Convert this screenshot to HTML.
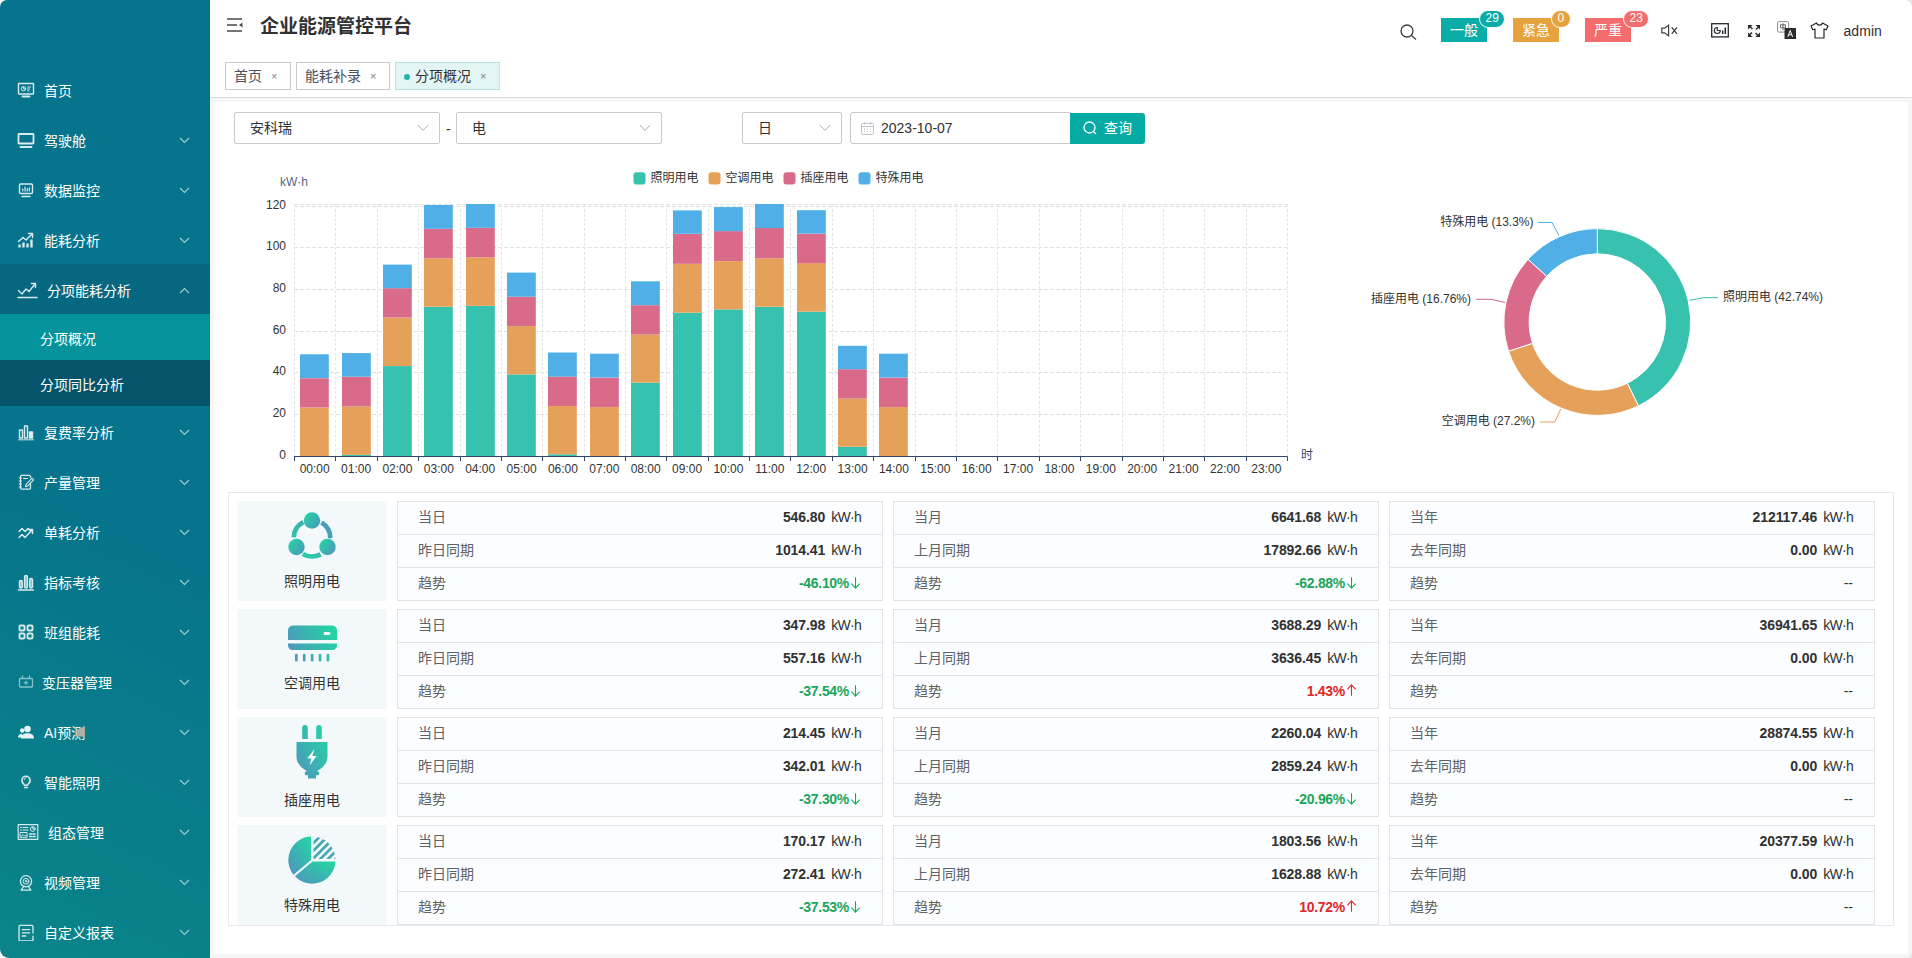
<!DOCTYPE html>
<html lang="zh-CN">
<head>
<meta charset="utf-8">
<title>企业能源管控平台</title>
<style>
*{box-sizing:border-box;margin:0;padding:0}
html,body{width:1912px;height:958px;overflow:hidden;background:#f6f6f6;font-family:"Liberation Sans", "Noto Sans CJK SC", sans-serif;font-size:14px;color:#303133}
.abs{position:absolute}
#app{position:relative;width:1912px;height:958px;overflow:hidden}
/* sidebar */
#sb{position:absolute;left:0;top:0;width:210px;height:958px;background:linear-gradient(25deg,#0a8489 0%,#06748c 48%);border-radius:7px 0 0 9px;z-index:5}
.sb-item{position:absolute;left:0;width:210px;height:50px;color:#fff;font-size:14px}
.sb-item .mi{position:absolute;left:17px;top:17px}
.sb-item span{position:absolute;top:0;line-height:55px;white-space:nowrap}
.sb-item .chev{position:absolute;left:179px;top:23px}
.sb-open{position:absolute;left:0;width:210px;background:#066880}
.sb-sub{position:absolute;left:0;width:210px;height:46px;background:#05546c;color:#fff;font-size:14px}
.sb-sub.act{background:#04929b}
.sb-sub span{position:absolute;left:40px;top:0;line-height:50px}
/* header */
#hd{position:absolute;left:210px;top:0;width:1702px;height:98px;background:#fff;border-bottom:1px solid #d8dce5}
#title{position:absolute;left:50px;top:0;line-height:54px;font-size:19px;font-weight:bold;color:#303133;white-space:nowrap}
.tab{position:absolute;top:62px;height:28px;border:1px solid #cbcbcb;background:#fff;color:#495060;font-size:14px;line-height:26px;padding-left:8px;white-space:nowrap}
.tab i{font-style:normal;font-size:11px;color:#7a808c;margin-left:9px;position:relative;top:-1px}
.tab.on{background:#e4f5f6;border-color:#b5e4e6;color:#303133}
.tab.on:before{content:"";display:inline-block;width:6px;height:6px;border-radius:50%;background:#26b2ad;margin-right:5px;position:relative;top:-1px}
.bd{position:absolute;top:18px;height:24px;width:46px;color:#fff;font-size:14px;line-height:25px;text-align:center}
.bb{position:absolute;top:9.5px;height:18px;border-radius:9px;border:1px solid #fff;color:#fff;font-size:12px;line-height:14.500px;text-align:center;padding:0 5.500px}
/* main */
#main{position:absolute;left:214px;top:102px;width:1694px;height:852px;background:#fff}
.sel{position:absolute;top:112px;height:32px;border:1px solid #c9c9c9;border-radius:2px;background:#fff;font-size:14px;line-height:31px;color:#303133;padding-left:15px}
.sel svg{position:absolute;right:10px;top:11px}
#btn{position:absolute;left:1070px;top:113px;width:75px;height:31px;background:#06aaa5;border-radius:0 3px 3px 0;color:#fff;font-size:14px;line-height:30px}
#wrap{position:absolute;left:228px;top:492px;width:1666px;height:434px;border:1px solid #e6e9ed;background:#fff}
.card{position:absolute;left:237px;width:150px;height:100px;background:#f3f8fb}
.cname{position:absolute;left:237px;width:150px;text-align:center;font-size:14px;line-height:22px;color:#303133}
.tbl{position:absolute;width:486px;height:100px;border:1px solid #dfe4ea;background:#fcfdfe}
.row{position:relative;height:33px;border-bottom:1px solid #dfe4ea;font-size:14px;line-height:30px}
.row:last-child{border-bottom:none;height:32px}
.row .k{position:absolute;left:20px;color:#606266}
.row .v{position:absolute;right:21px;color:#303133;white-space:nowrap}
.row .v i{font-style:normal;letter-spacing:-0.7px;margin-left:6px}
.row .v b.dn,.row .v b.up{letter-spacing:-0.3px;margin-right:1px}
.row b{font-weight:bold;letter-spacing:-0.1px}
.dn{color:#1ca55c}.up{color:#e0272a}.na{color:#303133}
</style>
</head>
<body>
<div id="app">
<div id="hd">
  <svg class="abs" style="left:17px;top:18px" width="16" height="14" viewBox="0 0 16 14" fill="none" stroke="#4a4a4a" stroke-width="1.3"><path d="M0 1h15M0 7h10M0 13h15"/><path d="M15.500 4.500v5l-3.500-2.500z" fill="#4a4a4a" stroke="none"/></svg>
  <div id="title">企业能源管控平台</div>
  <div class="tab" style="left:15px;width:66px">首页<i>×</i></div>
  <div class="tab" style="left:86px;width:94px">能耗补录<i>×</i></div>
  <div class="tab on" style="left:185px;width:105px">分项概况<i>×</i></div>
  <svg class="abs" style="left:1190px;top:24px" width="17" height="16" viewBox="0 0 17 16" fill="none" stroke="#3c4043" stroke-width="1.3"><circle cx="7" cy="7" r="6"/><path d="M11.500 11.500l4.500 4"/></svg>
  <div class="bd" style="left:1231px;background:#0aaca7">一般</div><div class="bb" style="left:1269px;background:#0aaca7">29</div>
  <div class="bd" style="left:1303px;background:#e6a23c">紧急</div><div class="bb" style="left:1341px;background:#e6a23c">0</div>
  <div class="bd" style="left:1375px;background:#f56c6c">严重</div><div class="bb" style="left:1413px;background:#f56c6c">23</div>
  <svg class="abs" style="left:1451px;top:24px" width="17" height="13" viewBox="0 0 17 13" fill="none" stroke="#3c4043" stroke-width="1.200"><path d="M0.800 4.200h2.800l4-3v10.600l-4-3h-2.800z"/><path d="M10.700 3.400l5.300 6.400M16 3.400l-5.300 6.400" stroke-width="1.300"/></svg>
  <svg class="abs" style="left:1501px;top:23px" width="18" height="15" viewBox="0 0 18 15" fill="none" stroke="#24292e" stroke-width="1.300"><rect x="0.700" y="0.700" width="16.600" height="13.200"/><path d="M9.300 7.500a3 3 0 1 1-3-3v3z" stroke-width="1.100"/><path d="M11.700 11v-3.500M14.300 11v-6.500" stroke-width="1.500"/></svg>
  <svg class="abs" style="left:1538px;top:25px" width="12" height="12" viewBox="0 0 12 12" fill="#24292e"><path d="M0 0h4.500l-1.500 1.500 2 2-1 1-2-2-2 2zM12 0v4.500l-1.500-1.500-2 2-1-1 2-2-2-2zM0 12v-4.500l1.500 1.500 2-2 1 1-2 2 2 2zM12 12h-4.500l1.500-1.500-2-2 1-1 2 2 2-2z"/></svg>
  <svg class="abs" style="left:1567px;top:21px" width="20" height="18" viewBox="0 0 20 18"><rect x="0.600" y="0.600" width="11" height="10.500" rx="1.200" fill="#fff" stroke="#8a8a8a" stroke-width="1"/><path d="M3.500 3.800h5v3h-5zM6 2.300v7" fill="none" stroke="#555" stroke-width="0.900"/><rect x="7.500" y="7" width="11.500" height="11" rx="0.500" fill="#2b2b2b"/><path d="M10.800 15.800l2.400-6.300 2.400 6.300M11.700 13.800h3" fill="none" stroke="#fff" stroke-width="1"/></svg>
  <svg class="abs" style="left:1600px;top:22px" width="19" height="17" viewBox="0 0 19 17" fill="none" stroke="#24292e" stroke-width="1.200" stroke-linejoin="round"><path d="M6.500 1c0.500 1.500 1.700 2.200 3 2.200s2.500-0.700 3-2.200l5.500 3-1.800 3.800-2.200-0.800v9h-9v-9l-2.200 0.800-1.800-3.800z"/></svg>
  <div class="abs" style="left:1633.500px;top:22.400px;font-size:14px;line-height:18px;color:#303133;letter-spacing:0.05px">admin</div>
</div>
<div id="main"></div>
<svg class="abs" style="left:1902px;top:0" width="10" height="10" viewBox="0 0 10 10"><path d="M3.500 0h6.500v7a7.500 7.500 0 0 0-6.500-7z" fill="#e6e6e6"/></svg>
<svg class="abs" style="left:1902px;top:948px" width="10" height="10" viewBox="0 0 10 10"><path d="M10 3v7h-6.500a7.500 7.500 0 0 0 6.500-7z" fill="#e9e9e9"/></svg>
<div id="sb">
<div class="sb-open" style="top:264px;height:50px"></div>
<div class="sb-sub act" style="top:314px"><span>分项概况</span></div>
<div class="sb-sub" style="top:360px"><span>分项同比分析</span></div>
<div class="sb-item" style="top:64px"><svg class="mi" width="18" height="18" viewBox="0 0 18 18" fill="none" stroke="#d8ebee" stroke-width="1.4" stroke-linecap="round" stroke-linejoin="round"><rect x="1.5" y="2.5" width="15" height="10.5" rx="0.5"/><path d="M5.5 15.5h7" stroke-width="1.8"/><circle cx="6.5" cy="7.7" r="2.2" stroke-width="1"/><path d="M6.5 6.4v1.4h1.2M10.5 6h3M10.5 8h2.2M10.5 9.8h1.4" stroke-width="1"/></svg><span style="left:44px">首页</span></div>
<div class="sb-item" style="top:114px"><svg class="mi" width="18" height="18" viewBox="0 0 18 18" fill="none" stroke="#d8ebee" stroke-width="1.4" stroke-linecap="round" stroke-linejoin="round"><rect x="1.5" y="3" width="15" height="9.5" rx="0.5" stroke-width="1.8"/><path d="M3.5 16h11" stroke-width="1.8"/></svg><span style="left:44px">驾驶舱</span><svg class="chev" width="11" height="7" viewBox="0 0 11 7" fill="none" stroke="#a5ccd4" stroke-width="1.1"><path d="M1 1l4.5 4.5L10 1"/></svg></div>
<div class="sb-item" style="top:164px"><svg class="mi" width="18" height="18" viewBox="0 0 18 18" fill="none" stroke="#d8ebee" stroke-width="1.4" stroke-linecap="round" stroke-linejoin="round"><rect x="2.5" y="3" width="13" height="9.5" rx="1.2"/><path d="M5 15.5h8" stroke-width="1.5"/><path d="M5.8 10V8M8 10V6M10.2 10V7.5M12.3 10V6.8" stroke-width="1.2"/></svg><span style="left:44px">数据监控</span><svg class="chev" width="11" height="7" viewBox="0 0 11 7" fill="none" stroke="#a5ccd4" stroke-width="1.1"><path d="M1 1l4.5 4.5L10 1"/></svg></div>
<div class="sb-item" style="top:214px"><svg class="mi" width="18" height="18" viewBox="0 0 18 18" fill="none" stroke="#d8ebee" stroke-width="1.4" stroke-linecap="round" stroke-linejoin="round"><path d="M2.5 16.5v-3M6.5 16.5v-5M10.5 16.5v-4M14.5 16.5v-8" stroke-width="2.4" stroke-linecap="butt"/><path d="M1.5 10.5l4.5-4 3 2.5 6-6" stroke-width="1.5"/><path d="M11.5 2.5h4v4" stroke-width="1.5"/></svg><span style="left:44px">能耗分析</span><svg class="chev" width="11" height="7" viewBox="0 0 11 7" fill="none" stroke="#a5ccd4" stroke-width="1.1"><path d="M1 1l4.5 4.5L10 1"/></svg></div>
<div class="sb-item" style="top:264px"><svg class="mi" width="21" height="18" viewBox="0 0 21 18" fill="none" stroke="#d8ebee" stroke-width="1.4" stroke-linecap="round" stroke-linejoin="round"><path d="M1.5 9.5l3.5 3.5 4-5 3 2.5 6-7.5" stroke-width="1.4"/><path d="M14.5 2.5h4v4" stroke-width="1.4"/><path d="M1 16.5h19" stroke-width="1.5"/></svg><span style="left:47px">分项能耗分析</span><svg class="chev" width="11" height="7" viewBox="0 0 11 7" fill="none" stroke="#a5ccd4" stroke-width="1.1"><path d="M1 6l4.5-4.5L10 6"/></svg></div>
<div class="sb-item" style="top:406px"><svg class="mi" width="18" height="18" viewBox="0 0 18 18" fill="none" stroke="#d8ebee" stroke-width="1.4" stroke-linecap="round" stroke-linejoin="round"><rect x="2.5" y="7" width="3" height="8"/><rect x="7.5" y="3" width="3" height="12"/><rect x="12.5" y="9" width="3" height="6" fill="#e8f4f6"/><path d="M1.5 16.8h15" stroke-width="1"/></svg><span style="left:44px">复费率分析</span><svg class="chev" width="11" height="7" viewBox="0 0 11 7" fill="none" stroke="#a5ccd4" stroke-width="1.1"><path d="M1 1l4.5 4.5L10 1"/></svg></div>
<div class="sb-item" style="top:456px"><svg class="mi" width="18" height="18" viewBox="0 0 18 18" fill="none" stroke="#d8ebee" stroke-width="1.4" stroke-linecap="round" stroke-linejoin="round"><path d="M13.5 10.500v4.500a1.200 1.200 0 0 1-1.200 1.200h-7.600a1.200 1.200 0 0 1-1.200-1.200v-11.500a1.200 1.200 0 0 1 1.200-1.200h7.600a1.200 1.200 0 0 1 1.200 1.200v1" stroke-width="1.200"/><path d="M2.200 5h2.400M2.200 8h2.400M2.200 11h2.400M2.200 14h2.400" stroke-width="1"/><path d="M15 5.200l1.600 1.600-5.800 6.200-2.300.700.600-2.400z" stroke-width="1.100"/><path d="M6.500 5.500h4" stroke-width="1"/></svg><span style="left:44px">产量管理</span><svg class="chev" width="11" height="7" viewBox="0 0 11 7" fill="none" stroke="#a5ccd4" stroke-width="1.1"><path d="M1 1l4.5 4.5L10 1"/></svg></div>
<div class="sb-item" style="top:506px"><svg class="mi" width="18" height="18" viewBox="0 0 18 18" fill="none" stroke="#d8ebee" stroke-width="1.4" stroke-linecap="round" stroke-linejoin="round"><path d="M2 8.5l3-3 3 3 3-3 2.5 2.5" stroke-width="1.5"/><path d="M2 14.5l3-3 3 3 7-7.5" stroke-width="1.5"/><path d="M11.5 6.5h4v4" stroke-width="1.5"/></svg><span style="left:44px">单耗分析</span><svg class="chev" width="11" height="7" viewBox="0 0 11 7" fill="none" stroke="#a5ccd4" stroke-width="1.1"><path d="M1 1l4.5 4.5L10 1"/></svg></div>
<div class="sb-item" style="top:556px"><svg class="mi" width="18" height="18" viewBox="0 0 18 18" fill="none" stroke="#d8ebee" stroke-width="1.4" stroke-linecap="round" stroke-linejoin="round"><rect x="2.500" y="7.500" width="2.800" height="7.500" rx="1.300" fill="#e8f4f6" fill-opacity=".55"/><rect x="7.600" y="2.500" width="2.800" height="12.500" rx="1.300" fill="#e8f4f6" fill-opacity=".55"/><rect x="12.700" y="5.500" width="2.800" height="9.500" rx="1.300" fill="#e8f4f6" fill-opacity=".55"/><path d="M1.500 17h15" stroke-width="1.300"/></svg><span style="left:44px">指标考核</span><svg class="chev" width="11" height="7" viewBox="0 0 11 7" fill="none" stroke="#a5ccd4" stroke-width="1.1"><path d="M1 1l4.5 4.5L10 1"/></svg></div>
<div class="sb-item" style="top:606px"><svg class="mi" width="18" height="18" viewBox="0 0 18 18" fill="none" stroke="#d8ebee" stroke-width="1.4" stroke-linecap="round" stroke-linejoin="round"><rect x="2.500" y="2.500" width="5" height="5" rx="1" stroke-width="1.900"/><rect x="10.500" y="2.500" width="5" height="5" rx="1" stroke-width="1.900"/><rect x="2.500" y="10.500" width="5" height="5" rx="1" stroke-width="1.900"/><rect x="10.500" y="10.500" width="5" height="5" rx="1" stroke-width="1.900"/></svg><span style="left:44px">班组能耗</span><svg class="chev" width="11" height="7" viewBox="0 0 11 7" fill="none" stroke="#a5ccd4" stroke-width="1.1"><path d="M1 1l4.5 4.5L10 1"/></svg></div>
<div class="sb-item" style="top:656px"><svg class="mi" width="18" height="18" viewBox="0 0 18 18" fill="none" stroke="#d8ebee" stroke-width="1.4" stroke-linecap="round" stroke-linejoin="round"><g opacity=".62"><rect x="2.500" y="5.500" width="13" height="8.500" rx="0.800" stroke-width="1.300"/><path d="M5.500 5.500v-2.500M12.500 5.500v-2.500" stroke-width="1.300"/><path d="M9 8v3.500M7.300 9.700h3.400" stroke-width="1.200"/></g></svg><span style="left:42px">变压器管理</span><svg class="chev" width="11" height="7" viewBox="0 0 11 7" fill="none" stroke="#a5ccd4" stroke-width="1.1"><path d="M1 1l4.5 4.5L10 1"/></svg></div>
<div class="sb-item" style="top:706px"><svg class="mi" width="18" height="18" viewBox="0 0 18 18" fill="none" stroke="#d8ebee" stroke-width="1.4" stroke-linecap="round" stroke-linejoin="round"><circle cx="10.5" cy="6" r="3.3" fill="#e8f4f6" stroke="none"/><path d="M4 15.5c0-3.5 2.8-5.2 6.5-5.2s6.5 1.7 6.5 5.2z" fill="#e8f4f6" stroke="none"/><circle cx="5.2" cy="7.5" r="2.2" fill="#e8f4f6" stroke="none"/><path d="M1 14.5c0-2.5 1.7-3.8 4-3.8v3.8z" fill="#e8f4f6" stroke="none"/></svg><span style="left:44px">AI预测</span><svg class="chev" width="11" height="7" viewBox="0 0 11 7" fill="none" stroke="#a5ccd4" stroke-width="1.1"><path d="M1 1l4.5 4.5L10 1"/></svg></div>
<div class="sb-item" style="top:756px"><svg class="mi" width="18" height="18" viewBox="0 0 18 18" fill="none" stroke="#d8ebee" stroke-width="1.4" stroke-linecap="round" stroke-linejoin="round"><path d="M9 3.200a4.200 4.200 0 0 0-2.400 7.600c.5.400.800.900.800 1.500h3.200c0-.6.300-1.100.8-1.500a4.200 4.200 0 0 0-2.400-7.600z" stroke-width="1.500"/><path d="M7.600 14.500h2.800" stroke-width="1.500"/><path d="M7 6.700a2.100 2.100 0 0 1 1.500-1.600" stroke-width="1"/></svg><span style="left:44px">智能照明</span><svg class="chev" width="11" height="7" viewBox="0 0 11 7" fill="none" stroke="#a5ccd4" stroke-width="1.1"><path d="M1 1l4.5 4.5L10 1"/></svg></div>
<div class="sb-item" style="top:806px"><svg class="mi" width="22" height="18" viewBox="0 0 22 18" fill="none" stroke="#d8ebee" stroke-width="1.4" stroke-linecap="round" stroke-linejoin="round"><rect x="1.2" y="1.7" width="19.6" height="14.6" stroke-width="1.2"/><path d="M3.5 4.5h1M6 4.5h5M3.5 7h1M6 7h5" stroke-width="1.1"/><circle cx="15.8" cy="6" r="2.4" stroke-width="1"/><path d="M15.8 4.4V6h1.6" stroke-width="1"/><rect x="3.5" y="9.5" width="6.5" height="4.8" stroke-width="1"/><path d="M4 13.5l2-2 1.5 1.5 1-1 1.3 1.3" stroke-width="0.9"/><path d="M12.5 11h2.2M16 11h2.2M12.5 13.5h2.2M16 13.5h2.2" stroke-width="1.3"/></svg><span style="left:48px">组态管理</span><svg class="chev" width="11" height="7" viewBox="0 0 11 7" fill="none" stroke="#a5ccd4" stroke-width="1.1"><path d="M1 1l4.5 4.5L10 1"/></svg></div>
<div class="sb-item" style="top:856px"><svg class="mi" width="18" height="18" viewBox="0 0 18 18" fill="none" stroke="#d8ebee" stroke-width="1.4" stroke-linecap="round" stroke-linejoin="round"><g transform="translate(0 0.8)"><circle cx="9" cy="7.5" r="5.600" stroke-width="1.300"/><circle cx="9" cy="7.500" r="2.900" stroke-width="1"/><circle cx="9" cy="7.500" r="0.900" stroke-width="0.900"/><path d="M6.500 12.800l-2.300 3.400M11.500 12.800l2.300 3.400M4 16.300h10" stroke-width="1.200"/></g></svg><span style="left:44px">视频管理</span><svg class="chev" width="11" height="7" viewBox="0 0 11 7" fill="none" stroke="#a5ccd4" stroke-width="1.1"><path d="M1 1l4.5 4.5L10 1"/></svg></div>
<div class="sb-item" style="top:906px"><svg class="mi" width="18" height="18" viewBox="0 0 18 18" fill="none" stroke="#d8ebee" stroke-width="1.4" stroke-linecap="round" stroke-linejoin="round"><path d="M16.500 12.500v3.500a1.200 1.200 0 0 1-1.200 1.200h-11.600a1.200 1.200 0 0 1-1.200-1.200v-13a1.200 1.200 0 0 1 1.200-1.200h11.600a1.200 1.200 0 0 1 1.200 1.200v6.500" stroke-width="1.300" transform="translate(-0.500 0.600)"/><path d="M5.300 6.600h7.400M5.300 9.800h7.400M5.300 13h3.500" stroke-width="1.300"/></svg><span style="left:44px">自定义报表</span><svg class="chev" width="11" height="7" viewBox="0 0 11 7" fill="none" stroke="#a5ccd4" stroke-width="1.1"><path d="M1 1l4.5 4.5L10 1"/></svg></div>
</div>
<!-- filters -->
<div class="sel" style="left:234px;width:206px">安科瑞<svg width="12" height="8" viewBox="0 0 12 8" fill="none" stroke="#a8abb2" stroke-width="1"><path d="M1 1l5 5.500 5-5.500"/></svg></div>
<div class="abs" style="left:446px;top:113px;line-height:32px;font-size:14px;color:#303133">-</div>
<div class="sel" style="left:456px;width:206px">电<svg width="12" height="8" viewBox="0 0 12 8" fill="none" stroke="#a8abb2" stroke-width="1"><path d="M1 1l5 5.500 5-5.500"/></svg></div>
<div class="sel" style="left:742px;width:100px">日<svg width="12" height="8" viewBox="0 0 12 8" fill="none" stroke="#a8abb2" stroke-width="1"><path d="M1 1l5 5.500 5-5.500"/></svg></div>
<div class="sel" style="left:850px;width:221px;padding-left:30px;border-radius:3px 0 0 3px"><svg style="left:10px;top:9px" width="13" height="13" viewBox="0 0 13 13" fill="none" stroke="#c0c4cc" stroke-width="1"><rect x="0.500" y="1.500" width="12" height="11" rx="1"/><path d="M0.500 4.500h12M3.500 0v2.500M9.500 0v2.500M3 7h1M6 7h1M9 7h1M3 9.500h1M6 9.500h1M9 9.500h1"/></svg>2023-10-07</div>
<div id="btn"><svg class="abs" style="left:13px;top:8px" width="14" height="14" viewBox="0 0 14 14" fill="none" stroke="#fff" stroke-width="1.300"><circle cx="6.500" cy="6.500" r="5.500"/><path d="M10.500 10.500l2.500 2.500"/></svg><span class="abs" style="left:34px">查询</span></div>
<svg class="abs" style="left:210px;top:150px" width="1130" height="340" viewBox="210 150 1130 340" font-family='&quot;Liberation Sans&quot;, &quot;Noto Sans CJK SC&quot;, sans-serif' font-size="12">
<text x="286" y="459.3" text-anchor="end" fill="#333">0</text>
<line x1="294.0" x2="1287.0" y1="414.5" y2="414.5" stroke="#e2e2e2" stroke-dasharray="4 2" stroke-width="1"/>
<text x="286" y="417.3" text-anchor="end" fill="#333">20</text>
<line x1="294.0" x2="1287.0" y1="372.5" y2="372.5" stroke="#e2e2e2" stroke-dasharray="4 2" stroke-width="1"/>
<text x="286" y="375.3" text-anchor="end" fill="#333">40</text>
<line x1="294.0" x2="1287.0" y1="331.5" y2="331.5" stroke="#e2e2e2" stroke-dasharray="4 2" stroke-width="1"/>
<text x="286" y="334.3" text-anchor="end" fill="#333">60</text>
<line x1="294.0" x2="1287.0" y1="289.5" y2="289.5" stroke="#e2e2e2" stroke-dasharray="4 2" stroke-width="1"/>
<text x="286" y="292.3" text-anchor="end" fill="#333">80</text>
<line x1="294.0" x2="1287.0" y1="247.5" y2="247.5" stroke="#e2e2e2" stroke-dasharray="4 2" stroke-width="1"/>
<text x="286" y="250.3" text-anchor="end" fill="#333">100</text>
<line x1="294.0" x2="1287.0" y1="206.5" y2="206.5" stroke="#e2e2e2" stroke-dasharray="4 2" stroke-width="1"/>
<text x="286" y="209.3" text-anchor="end" fill="#333">120</text>
<line x1="294.0" x2="1287.0" y1="204.5" y2="204.5" stroke="#e2e2e2" stroke-dasharray="4 2" stroke-width="1"/>
<line x1="294.5" x2="294.5" y1="204" y2="456.0" stroke="#e6e6e6" stroke-dasharray="3 1.8" stroke-width="1"/>
<line x1="335.5" x2="335.5" y1="204" y2="456.0" stroke="#e6e6e6" stroke-dasharray="3 1.8" stroke-width="1"/>
<line x1="377.5" x2="377.5" y1="204" y2="456.0" stroke="#e6e6e6" stroke-dasharray="3 1.8" stroke-width="1"/>
<line x1="418.5" x2="418.5" y1="204" y2="456.0" stroke="#e6e6e6" stroke-dasharray="3 1.8" stroke-width="1"/>
<line x1="460.5" x2="460.5" y1="204" y2="456.0" stroke="#e6e6e6" stroke-dasharray="3 1.8" stroke-width="1"/>
<line x1="501.5" x2="501.5" y1="204" y2="456.0" stroke="#e6e6e6" stroke-dasharray="3 1.8" stroke-width="1"/>
<line x1="542.5" x2="542.5" y1="204" y2="456.0" stroke="#e6e6e6" stroke-dasharray="3 1.8" stroke-width="1"/>
<line x1="584.5" x2="584.5" y1="204" y2="456.0" stroke="#e6e6e6" stroke-dasharray="3 1.8" stroke-width="1"/>
<line x1="625.5" x2="625.5" y1="204" y2="456.0" stroke="#e6e6e6" stroke-dasharray="3 1.8" stroke-width="1"/>
<line x1="666.5" x2="666.5" y1="204" y2="456.0" stroke="#e6e6e6" stroke-dasharray="3 1.8" stroke-width="1"/>
<line x1="708.5" x2="708.5" y1="204" y2="456.0" stroke="#e6e6e6" stroke-dasharray="3 1.8" stroke-width="1"/>
<line x1="749.5" x2="749.5" y1="204" y2="456.0" stroke="#e6e6e6" stroke-dasharray="3 1.8" stroke-width="1"/>
<line x1="790.5" x2="790.5" y1="204" y2="456.0" stroke="#e6e6e6" stroke-dasharray="3 1.8" stroke-width="1"/>
<line x1="832.5" x2="832.5" y1="204" y2="456.0" stroke="#e6e6e6" stroke-dasharray="3 1.8" stroke-width="1"/>
<line x1="873.5" x2="873.5" y1="204" y2="456.0" stroke="#e6e6e6" stroke-dasharray="3 1.8" stroke-width="1"/>
<line x1="915.5" x2="915.5" y1="204" y2="456.0" stroke="#e6e6e6" stroke-dasharray="3 1.8" stroke-width="1"/>
<line x1="956.5" x2="956.5" y1="204" y2="456.0" stroke="#e6e6e6" stroke-dasharray="3 1.8" stroke-width="1"/>
<line x1="997.5" x2="997.5" y1="204" y2="456.0" stroke="#e6e6e6" stroke-dasharray="3 1.8" stroke-width="1"/>
<line x1="1039.5" x2="1039.5" y1="204" y2="456.0" stroke="#e6e6e6" stroke-dasharray="3 1.8" stroke-width="1"/>
<line x1="1080.5" x2="1080.5" y1="204" y2="456.0" stroke="#e6e6e6" stroke-dasharray="3 1.8" stroke-width="1"/>
<line x1="1122.5" x2="1122.5" y1="204" y2="456.0" stroke="#e6e6e6" stroke-dasharray="3 1.8" stroke-width="1"/>
<line x1="1163.5" x2="1163.5" y1="204" y2="456.0" stroke="#e6e6e6" stroke-dasharray="3 1.8" stroke-width="1"/>
<line x1="1204.5" x2="1204.5" y1="204" y2="456.0" stroke="#e6e6e6" stroke-dasharray="3 1.8" stroke-width="1"/>
<line x1="1246.5" x2="1246.5" y1="204" y2="456.0" stroke="#e6e6e6" stroke-dasharray="3 1.8" stroke-width="1"/>
<line x1="1287.5" x2="1287.5" y1="204" y2="456.0" stroke="#e6e6e6" stroke-dasharray="3 1.8" stroke-width="1"/>
<rect x="300" y="407.5" width="28.8" height="48.5" fill="#e5a15a"/>
<rect x="300" y="378.2" width="28.8" height="29.3" fill="#da6a8a"/>
<rect x="300" y="354.3" width="28.8" height="23.8" fill="#4fafe6"/>
<rect x="342" y="455.0" width="28.8" height="1.0" fill="#36c2ae"/>
<rect x="342" y="406.4" width="28.8" height="48.5" fill="#e5a15a"/>
<rect x="342" y="376.7" width="28.8" height="29.7" fill="#da6a8a"/>
<rect x="342" y="353.1" width="28.8" height="23.6" fill="#4fafe6"/>
<rect x="383" y="366.1" width="28.8" height="89.9" fill="#36c2ae"/>
<rect x="383" y="317.5" width="28.8" height="48.5" fill="#e5a15a"/>
<rect x="383" y="288.2" width="28.8" height="29.3" fill="#da6a8a"/>
<rect x="383" y="264.6" width="28.8" height="23.6" fill="#4fafe6"/>
<rect x="424" y="306.9" width="28.8" height="149.1" fill="#36c2ae"/>
<rect x="424" y="258.3" width="28.8" height="48.5" fill="#e5a15a"/>
<rect x="424" y="228.8" width="28.8" height="29.5" fill="#da6a8a"/>
<rect x="424" y="205.0" width="28.8" height="23.8" fill="#4fafe6"/>
<rect x="466" y="305.8" width="28.8" height="150.2" fill="#36c2ae"/>
<rect x="466" y="257.3" width="28.8" height="48.5" fill="#e5a15a"/>
<rect x="466" y="227.8" width="28.8" height="29.5" fill="#da6a8a"/>
<rect x="466" y="204.0" width="28.8" height="23.8" fill="#4fafe6"/>
<rect x="507" y="374.4" width="28.8" height="81.6" fill="#36c2ae"/>
<rect x="507" y="326.1" width="28.8" height="48.3" fill="#e5a15a"/>
<rect x="507" y="296.6" width="28.8" height="29.5" fill="#da6a8a"/>
<rect x="507" y="272.6" width="28.8" height="24.1" fill="#4fafe6"/>
<rect x="548" y="454.3" width="28.8" height="1.7" fill="#36c2ae"/>
<rect x="548" y="406.0" width="28.8" height="48.3" fill="#e5a15a"/>
<rect x="548" y="376.5" width="28.8" height="29.5" fill="#da6a8a"/>
<rect x="548" y="352.5" width="28.8" height="24.1" fill="#4fafe6"/>
<rect x="590" y="407.1" width="28.8" height="48.9" fill="#e5a15a"/>
<rect x="590" y="377.6" width="28.8" height="29.5" fill="#da6a8a"/>
<rect x="590" y="353.7" width="28.8" height="23.8" fill="#4fafe6"/>
<rect x="631" y="382.6" width="28.8" height="73.4" fill="#36c2ae"/>
<rect x="631" y="334.5" width="28.8" height="48.1" fill="#e5a15a"/>
<rect x="631" y="305.2" width="28.8" height="29.3" fill="#da6a8a"/>
<rect x="631" y="281.3" width="28.8" height="23.8" fill="#4fafe6"/>
<rect x="673" y="312.7" width="28.8" height="143.3" fill="#36c2ae"/>
<rect x="673" y="263.8" width="28.8" height="48.9" fill="#e5a15a"/>
<rect x="673" y="233.9" width="28.8" height="29.9" fill="#da6a8a"/>
<rect x="673" y="210.4" width="28.8" height="23.4" fill="#4fafe6"/>
<rect x="714" y="309.4" width="28.8" height="146.6" fill="#36c2ae"/>
<rect x="714" y="261.1" width="28.8" height="48.3" fill="#e5a15a"/>
<rect x="714" y="231.1" width="28.8" height="29.9" fill="#da6a8a"/>
<rect x="714" y="207.1" width="28.8" height="24.1" fill="#4fafe6"/>
<rect x="755" y="306.9" width="28.8" height="149.1" fill="#36c2ae"/>
<rect x="755" y="258.3" width="28.8" height="48.5" fill="#e5a15a"/>
<rect x="755" y="228.0" width="28.8" height="30.3" fill="#da6a8a"/>
<rect x="755" y="204.0" width="28.8" height="24.1" fill="#4fafe6"/>
<rect x="797" y="311.7" width="28.8" height="144.3" fill="#36c2ae"/>
<rect x="797" y="263.1" width="28.8" height="48.5" fill="#e5a15a"/>
<rect x="797" y="233.7" width="28.8" height="29.5" fill="#da6a8a"/>
<rect x="797" y="210.2" width="28.8" height="23.4" fill="#4fafe6"/>
<rect x="838" y="446.8" width="28.8" height="9.2" fill="#36c2ae"/>
<rect x="838" y="398.5" width="28.8" height="48.3" fill="#e5a15a"/>
<rect x="838" y="369.2" width="28.8" height="29.3" fill="#da6a8a"/>
<rect x="838" y="345.8" width="28.8" height="23.4" fill="#4fafe6"/>
<rect x="879" y="407.1" width="28.8" height="48.9" fill="#e5a15a"/>
<rect x="879" y="377.6" width="28.8" height="29.5" fill="#da6a8a"/>
<rect x="879" y="353.7" width="28.8" height="23.8" fill="#4fafe6"/>
<line x1="294.0" x2="1287.5" y1="456.5" y2="456.5" stroke="#33466f" stroke-width="1"/>
<line x1="294.5" x2="294.5" y1="456.5" y2="461.0" stroke="#33466f" stroke-width="1"/>
<line x1="335.5" x2="335.5" y1="456.5" y2="461.0" stroke="#33466f" stroke-width="1"/>
<line x1="377.5" x2="377.5" y1="456.5" y2="461.0" stroke="#33466f" stroke-width="1"/>
<line x1="418.5" x2="418.5" y1="456.5" y2="461.0" stroke="#33466f" stroke-width="1"/>
<line x1="460.5" x2="460.5" y1="456.5" y2="461.0" stroke="#33466f" stroke-width="1"/>
<line x1="501.5" x2="501.5" y1="456.5" y2="461.0" stroke="#33466f" stroke-width="1"/>
<line x1="542.5" x2="542.5" y1="456.5" y2="461.0" stroke="#33466f" stroke-width="1"/>
<line x1="584.5" x2="584.5" y1="456.5" y2="461.0" stroke="#33466f" stroke-width="1"/>
<line x1="625.5" x2="625.5" y1="456.5" y2="461.0" stroke="#33466f" stroke-width="1"/>
<line x1="666.5" x2="666.5" y1="456.5" y2="461.0" stroke="#33466f" stroke-width="1"/>
<line x1="708.5" x2="708.5" y1="456.5" y2="461.0" stroke="#33466f" stroke-width="1"/>
<line x1="749.5" x2="749.5" y1="456.5" y2="461.0" stroke="#33466f" stroke-width="1"/>
<line x1="790.5" x2="790.5" y1="456.5" y2="461.0" stroke="#33466f" stroke-width="1"/>
<line x1="832.5" x2="832.5" y1="456.5" y2="461.0" stroke="#33466f" stroke-width="1"/>
<line x1="873.5" x2="873.5" y1="456.5" y2="461.0" stroke="#33466f" stroke-width="1"/>
<line x1="915.5" x2="915.5" y1="456.5" y2="461.0" stroke="#33466f" stroke-width="1"/>
<line x1="956.5" x2="956.5" y1="456.5" y2="461.0" stroke="#33466f" stroke-width="1"/>
<line x1="997.5" x2="997.5" y1="456.5" y2="461.0" stroke="#33466f" stroke-width="1"/>
<line x1="1039.5" x2="1039.5" y1="456.5" y2="461.0" stroke="#33466f" stroke-width="1"/>
<line x1="1080.5" x2="1080.5" y1="456.5" y2="461.0" stroke="#33466f" stroke-width="1"/>
<line x1="1122.5" x2="1122.5" y1="456.5" y2="461.0" stroke="#33466f" stroke-width="1"/>
<line x1="1163.5" x2="1163.5" y1="456.5" y2="461.0" stroke="#33466f" stroke-width="1"/>
<line x1="1204.5" x2="1204.5" y1="456.5" y2="461.0" stroke="#33466f" stroke-width="1"/>
<line x1="1246.5" x2="1246.5" y1="456.5" y2="461.0" stroke="#33466f" stroke-width="1"/>
<line x1="1287.5" x2="1287.5" y1="456.5" y2="461.0" stroke="#33466f" stroke-width="1"/>
<text x="314.7" y="473" text-anchor="middle" fill="#333">00:00</text>
<text x="356.1" y="473" text-anchor="middle" fill="#333">01:00</text>
<text x="397.4" y="473" text-anchor="middle" fill="#333">02:00</text>
<text x="438.8" y="473" text-anchor="middle" fill="#333">03:00</text>
<text x="480.2" y="473" text-anchor="middle" fill="#333">04:00</text>
<text x="521.6" y="473" text-anchor="middle" fill="#333">05:00</text>
<text x="562.9" y="473" text-anchor="middle" fill="#333">06:00</text>
<text x="604.3" y="473" text-anchor="middle" fill="#333">07:00</text>
<text x="645.7" y="473" text-anchor="middle" fill="#333">08:00</text>
<text x="687.1" y="473" text-anchor="middle" fill="#333">09:00</text>
<text x="728.4" y="473" text-anchor="middle" fill="#333">10:00</text>
<text x="769.8" y="473" text-anchor="middle" fill="#333">11:00</text>
<text x="811.2" y="473" text-anchor="middle" fill="#333">12:00</text>
<text x="852.6" y="473" text-anchor="middle" fill="#333">13:00</text>
<text x="893.9" y="473" text-anchor="middle" fill="#333">14:00</text>
<text x="935.3" y="473" text-anchor="middle" fill="#333">15:00</text>
<text x="976.7" y="473" text-anchor="middle" fill="#333">16:00</text>
<text x="1018.1" y="473" text-anchor="middle" fill="#333">17:00</text>
<text x="1059.4" y="473" text-anchor="middle" fill="#333">18:00</text>
<text x="1100.8" y="473" text-anchor="middle" fill="#333">19:00</text>
<text x="1142.2" y="473" text-anchor="middle" fill="#333">20:00</text>
<text x="1183.6" y="473" text-anchor="middle" fill="#333">21:00</text>
<text x="1224.9" y="473" text-anchor="middle" fill="#333">22:00</text>
<text x="1266.3" y="473" text-anchor="middle" fill="#333">23:00</text>
<text x="280" y="186" fill="#56648a">kW·h</text>
<text x="1301" y="459" fill="#33466f">时</text>
<rect x="633.5" y="172.2" width="12" height="12.3" rx="3" fill="#36c2ae"/>
<text x="650.5" y="182.3" fill="#333">照明用电</text>
<rect x="708.5" y="172.2" width="12" height="12.3" rx="3" fill="#e5a15a"/>
<text x="725.5" y="182.3" fill="#333">空调用电</text>
<rect x="783.5" y="172.2" width="12" height="12.3" rx="3" fill="#da6a8a"/>
<text x="800.5" y="182.3" fill="#333">插座用电</text>
<rect x="858.5" y="172.2" width="12" height="12.3" rx="3" fill="#4fafe6"/>
<text x="875.5" y="182.3" fill="#333">特殊用电</text>
</svg>
<svg class="abs" style="left:1340px;top:190px" width="540" height="270" viewBox="1340 190 540 270" font-family='&quot;Liberation Sans&quot;, &quot;Noto Sans CJK SC&quot;, sans-serif' font-size="12">
<path d="M1597.30 228.60 A93.4 93.4 0 0 1 1638.44 405.85 L1627.34 383.23 A68.2 68.2 0 0 0 1597.30 253.80 Z" fill="#36c2ae" stroke="#fff" stroke-width="1"/>
<path d="M1638.44 405.85 A93.4 93.4 0 0 1 1508.58 351.20 L1532.52 343.32 A68.2 68.2 0 0 0 1627.34 383.23 Z" fill="#e5a15a" stroke="#fff" stroke-width="1"/>
<path d="M1508.58 351.20 A93.4 93.4 0 0 1 1528.02 259.36 L1546.71 276.26 A68.2 68.2 0 0 0 1532.52 343.32 Z" fill="#da6a8a" stroke="#fff" stroke-width="1"/>
<path d="M1528.02 259.36 A93.4 93.4 0 0 1 1597.30 228.60 L1597.30 253.80 A68.2 68.2 0 0 0 1546.71 276.26 Z" fill="#4fafe6" stroke="#fff" stroke-width="1"/>
<polyline points="1689.5,300.4 1703,297.7 1718,297.7" fill="none" stroke="#36c2ae"/>
<text x="1723" y="301" fill="#333">照明用电 (42.74%)</text>
<polyline points="1560.8,409 1554.8,422 1540,422" fill="none" stroke="#e5a15a"/>
<text x="1535" y="425" text-anchor="end" fill="#333">空调用电 (27.2%)</text>
<polyline points="1505,302.5 1491,299.3 1476,299.3" fill="none" stroke="#da6a8a"/>
<text x="1471" y="303" text-anchor="end" fill="#333">插座用电 (16.76%)</text>
<polyline points="1559,235.7 1552,222.4 1538,222.4" fill="none" stroke="#4fafe6"/>
<text x="1533.5" y="226" text-anchor="end" fill="#333">特殊用电 (13.3%)</text>
</svg>
<div id="wrap"></div>
<div class="card" style="top:501px"></div>
<div class="cname" style="top:570px">照明用电</div>
<div class="tbl" style="left:397px;top:501px"><div class="row"><span class="k">当日</span><span class="v"><b>546.80</b><i>kW·h</i></span></div><div class="row"><span class="k">昨日同期</span><span class="v"><b>1014.41</b><i>kW·h</i></span></div><div class="row"><span class="k">趋势</span><span class="v"><b class="dn">-46.10%<svg width="9" height="12" viewBox="0 0 9 12" fill="none" stroke="currentColor" stroke-width="1.1" style="margin-left:2px;vertical-align:-1px"><path d="M4.500 0.300v10.700M0.400 6.600l4.100 4.500 4.100-4.500"/></svg></b></span></div></div>
<div class="tbl" style="left:893px;top:501px"><div class="row"><span class="k">当月</span><span class="v"><b>6641.68</b><i>kW·h</i></span></div><div class="row"><span class="k">上月同期</span><span class="v"><b>17892.66</b><i>kW·h</i></span></div><div class="row"><span class="k">趋势</span><span class="v"><b class="dn">-62.88%<svg width="9" height="12" viewBox="0 0 9 12" fill="none" stroke="currentColor" stroke-width="1.1" style="margin-left:2px;vertical-align:-1px"><path d="M4.500 0.300v10.700M0.400 6.600l4.100 4.500 4.100-4.500"/></svg></b></span></div></div>
<div class="tbl" style="left:1389px;top:501px"><div class="row"><span class="k">当年</span><span class="v"><b>212117.46</b><i>kW·h</i></span></div><div class="row"><span class="k">去年同期</span><span class="v"><b>0.00</b><i>kW·h</i></span></div><div class="row"><span class="k">趋势</span><span class="v"><span class="na">--</span></span></div></div>
<div class="card" style="top:609px"></div>
<div class="cname" style="top:672px">空调用电</div>
<div class="tbl" style="left:397px;top:609px"><div class="row"><span class="k">当日</span><span class="v"><b>347.98</b><i>kW·h</i></span></div><div class="row"><span class="k">昨日同期</span><span class="v"><b>557.16</b><i>kW·h</i></span></div><div class="row"><span class="k">趋势</span><span class="v"><b class="dn">-37.54%<svg width="9" height="12" viewBox="0 0 9 12" fill="none" stroke="currentColor" stroke-width="1.1" style="margin-left:2px;vertical-align:-1px"><path d="M4.500 0.300v10.700M0.400 6.600l4.100 4.500 4.100-4.500"/></svg></b></span></div></div>
<div class="tbl" style="left:893px;top:609px"><div class="row"><span class="k">当月</span><span class="v"><b>3688.29</b><i>kW·h</i></span></div><div class="row"><span class="k">上月同期</span><span class="v"><b>3636.45</b><i>kW·h</i></span></div><div class="row"><span class="k">趋势</span><span class="v"><b class="up">1.43%<svg width="9" height="12" viewBox="0 0 9 12" fill="none" stroke="currentColor" stroke-width="1.1" style="margin-left:2px;vertical-align:0px"><path d="M4.500 11.700v-10.700M0.400 5.400l4.100-4.500 4.100 4.500"/></svg></b></span></div></div>
<div class="tbl" style="left:1389px;top:609px"><div class="row"><span class="k">当年</span><span class="v"><b>36941.65</b><i>kW·h</i></span></div><div class="row"><span class="k">去年同期</span><span class="v"><b>0.00</b><i>kW·h</i></span></div><div class="row"><span class="k">趋势</span><span class="v"><span class="na">--</span></span></div></div>
<div class="card" style="top:717px"></div>
<div class="cname" style="top:789px">插座用电</div>
<div class="tbl" style="left:397px;top:717px"><div class="row"><span class="k">当日</span><span class="v"><b>214.45</b><i>kW·h</i></span></div><div class="row"><span class="k">昨日同期</span><span class="v"><b>342.01</b><i>kW·h</i></span></div><div class="row"><span class="k">趋势</span><span class="v"><b class="dn">-37.30%<svg width="9" height="12" viewBox="0 0 9 12" fill="none" stroke="currentColor" stroke-width="1.1" style="margin-left:2px;vertical-align:-1px"><path d="M4.500 0.300v10.700M0.400 6.600l4.100 4.500 4.100-4.500"/></svg></b></span></div></div>
<div class="tbl" style="left:893px;top:717px"><div class="row"><span class="k">当月</span><span class="v"><b>2260.04</b><i>kW·h</i></span></div><div class="row"><span class="k">上月同期</span><span class="v"><b>2859.24</b><i>kW·h</i></span></div><div class="row"><span class="k">趋势</span><span class="v"><b class="dn">-20.96%<svg width="9" height="12" viewBox="0 0 9 12" fill="none" stroke="currentColor" stroke-width="1.1" style="margin-left:2px;vertical-align:-1px"><path d="M4.500 0.300v10.700M0.400 6.600l4.100 4.500 4.100-4.500"/></svg></b></span></div></div>
<div class="tbl" style="left:1389px;top:717px"><div class="row"><span class="k">当年</span><span class="v"><b>28874.55</b><i>kW·h</i></span></div><div class="row"><span class="k">去年同期</span><span class="v"><b>0.00</b><i>kW·h</i></span></div><div class="row"><span class="k">趋势</span><span class="v"><span class="na">--</span></span></div></div>
<div class="card" style="top:825px"></div>
<div class="cname" style="top:894px">特殊用电</div>
<div class="tbl" style="left:397px;top:825px"><div class="row"><span class="k">当日</span><span class="v"><b>170.17</b><i>kW·h</i></span></div><div class="row"><span class="k">昨日同期</span><span class="v"><b>272.41</b><i>kW·h</i></span></div><div class="row"><span class="k">趋势</span><span class="v"><b class="dn">-37.53%<svg width="9" height="12" viewBox="0 0 9 12" fill="none" stroke="currentColor" stroke-width="1.1" style="margin-left:2px;vertical-align:-1px"><path d="M4.500 0.300v10.700M0.400 6.600l4.100 4.500 4.100-4.500"/></svg></b></span></div></div>
<div class="tbl" style="left:893px;top:825px"><div class="row"><span class="k">当月</span><span class="v"><b>1803.56</b><i>kW·h</i></span></div><div class="row"><span class="k">上月同期</span><span class="v"><b>1628.88</b><i>kW·h</i></span></div><div class="row"><span class="k">趋势</span><span class="v"><b class="up">10.72%<svg width="9" height="12" viewBox="0 0 9 12" fill="none" stroke="currentColor" stroke-width="1.1" style="margin-left:2px;vertical-align:0px"><path d="M4.500 11.700v-10.700M0.400 5.400l4.100-4.500 4.100 4.500"/></svg></b></span></div></div>
<div class="tbl" style="left:1389px;top:825px"><div class="row"><span class="k">当年</span><span class="v"><b>20377.59</b><i>kW·h</i></span></div><div class="row"><span class="k">去年同期</span><span class="v"><b>0.00</b><i>kW·h</i></span></div><div class="row"><span class="k">趋势</span><span class="v"><span class="na">--</span></span></div></div><svg class="abs" style="left:288px;top:512px" width="48" height="48" viewBox="0 0 48 48"><defs><linearGradient id="g1" x1="0" y1="0" x2="1" y2="1"><stop offset="0" stop-color="#22d8a3"/><stop offset="1" stop-color="#4f93bc"/></linearGradient></defs><g fill="url(#g1)"><circle cx="24" cy="8.5" r="8.2"/><circle cx="8.5" cy="35" r="8.2"/><circle cx="39.5" cy="35" r="8.2"/></g><circle cx="24" cy="26.2" r="18.3" fill="none" stroke="url(#g1)" stroke-width="4.6" stroke-dasharray="18.6 19.73" stroke-dashoffset="-9.9" transform="rotate(-90 24 26.2)"/></svg><svg class="abs" style="left:288px;top:625px" width="49" height="37" viewBox="0 0 49 37"><defs><linearGradient id="g2" gradientUnits="userSpaceOnUse" x1="0" y1="30" x2="49" y2="5"><stop offset="0" stop-color="#4f93bc"/><stop offset="1" stop-color="#22d8a3"/></linearGradient></defs><path fill="url(#g2)" fill-rule="evenodd" d="M5 0.5h39a5 5 0 0 1 5 5v9.5h-49v-9.5a5 5 0 0 1 5-5zM37 7a1.5 1.5 0 0 0 0 3h4a1.5 1.5 0 0 0 0-3z M0 18.5h49v2a4.5 4.5 0 0 1-4.5 4.5h-40a4.5 4.5 0 0 1-4.5-4.5z"/><g fill="url(#g2)"><rect x="7" y="28.700" width="2.700" height="7.800" rx="1.350"/><rect x="14.900" y="28.700" width="2.700" height="7.800" rx="1.350"/><rect x="22.800" y="28.700" width="2.700" height="7.800" rx="1.350"/><rect x="30.700" y="28.700" width="2.700" height="7.800" rx="1.350"/><rect x="38.600" y="28.700" width="2.700" height="7.800" rx="1.350"/></g></svg><svg class="abs" style="left:296px;top:724px" width="32" height="56" viewBox="0 0 32 56"><defs><linearGradient id="g3" x1="0" y1="1" x2="1" y2="0"><stop offset="0" stop-color="#4f93bc"/><stop offset="1" stop-color="#22d8a3"/></linearGradient></defs><path fill="url(#g3)" fill-rule="evenodd" d="M6.200 3.800a2.800 2.800 0 0 1 5.600 0v11.200h-5.600zM20.200 3.800a2.800 2.800 0 0 1 5.600 0v11.200h-5.600zM0.500 18h31v14.500c0 7.500-5.500 11.500-10 14.300v0.700a1.900 1.900 0 0 1 0 3.800h-1.500v3.200h-8v-3.200h-1.500a1.900 1.900 0 0 1 0-3.800v-0.700c-4.500-2.800-10-6.800-10-14.300z M18.500 25l-7.300 9.500h4.200l-1.800 7.200 7-9.800h-4.200z"/></svg><svg class="abs" style="left:288px;top:836px" width="48" height="48" viewBox="0 0 48 48"><defs><linearGradient id="g4" x1="0" y1="1" x2="1" y2="0"><stop offset="0" stop-color="#4f93bc"/><stop offset="1" stop-color="#22d8a3"/></linearGradient></defs><defs><pattern id="hatch" width="5.400" height="5.400" patternUnits="userSpaceOnUse" patternTransform="rotate(-45)"><rect width="5.400" height="2.700" fill="#42a9b3"/></pattern><clipPath id="q1"><path d="M25.500 23V0.5a23.5 23.500 0 0 1 22 22.500z"/></clipPath></defs><path fill="url(#g4)" d="M23 0.500v23.500l-17.500 14.700a23.500 23.500 0 0 1 17.500-38.200z"/><path fill="url(#g4)" d="M24.500 25.500h23a23.500 23.500 0 0 1-40.500 14.800z"/><rect x="24" y="0" width="24" height="24" fill="url(#hatch)" clip-path="url(#q1)"/></svg>
</div>
</body>
</html>
